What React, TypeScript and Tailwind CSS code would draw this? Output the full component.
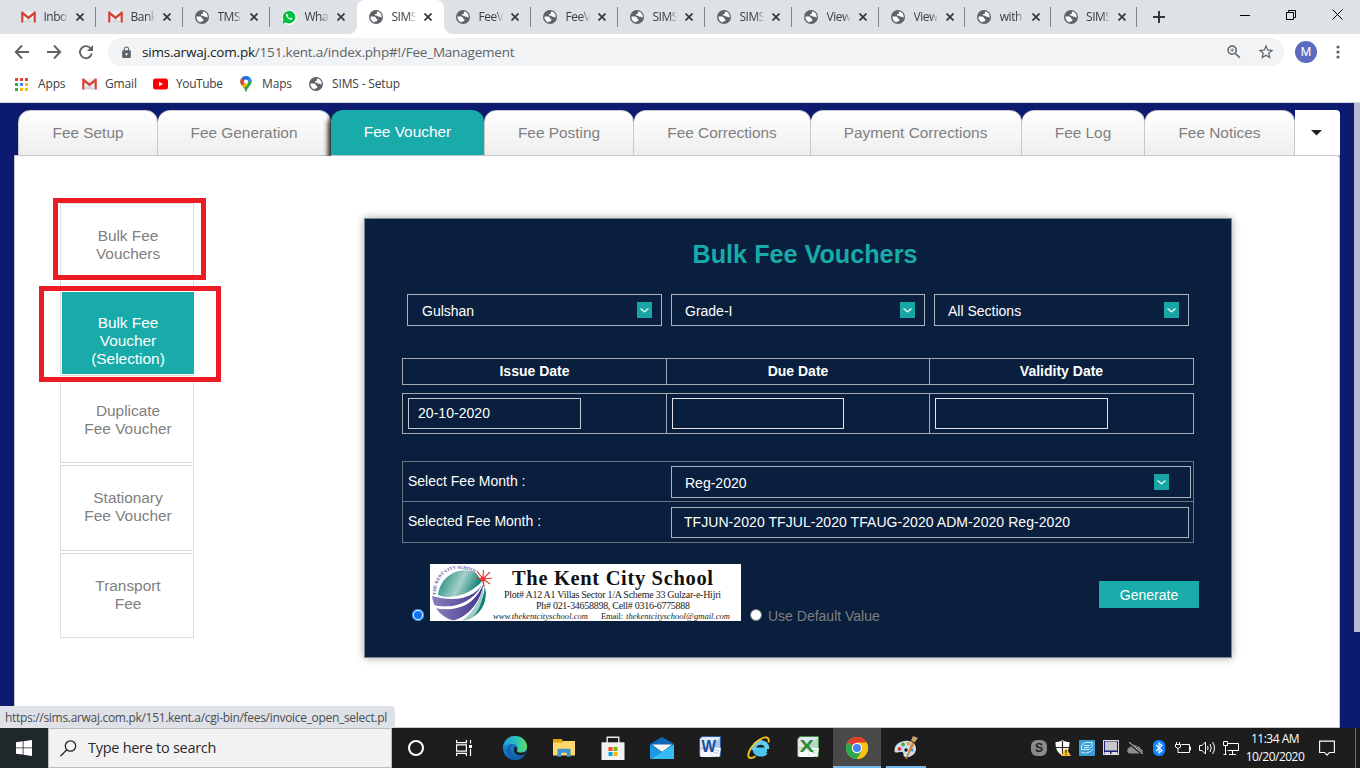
import React from 'react';
import { MdZoomIn, MdStarBorder, MdLock } from 'react-icons/md';

const SEGOE = "font-['Open_Sans','Noto_Sans',sans-serif]";

function Globe() {
  return (
    <svg width="14" height="14" viewBox="0 0 14 14" className="shrink-0">
      <circle cx="7" cy="7" r="7" fill="#5f6368" />
      <path d="M1.4 6.6h3.4c1.5 0 2.2.9 2.2 2.1h1.3v1.5c0 .8-.7 1.2-1.5 1.2H5.6v1.2C3.200 12 1.500 9.800 1.400 6.600z" fill="#fff" />
      <path d="M6.100 5.500V4.100h1.700V2.600c0-.5.500-1 1.100-1.100 2.300.7 3.800 2.900 3.800 5.200l-.4 1-1.200-.9H9.300L8.200 5.700z" fill="#fff" />
    </svg>
  );
}

function Gmail() {
  return (
    <svg width="15" height="12" viewBox="0 0 15 12" className="shrink-0">
      <path d="M1 .5h13v11H1z" fill="#eceff1" />
      <path d="M2 11.500 7.500 7l5.500 4.500z" fill="#d5d8da" />
      <path d="M.2 1.200C.2.500.700.300 1.300.300L7.500 5.200 13.700.300c.7 0 1.100.3 1.100.9V11.500H12.600V4.300L7.500 8.200 2.400 4.300V11.500H.2z" fill="#d64337" />
    </svg>
  );
}

function Whats() {
  return (
    <span className="flex size-[15px] shrink-0 items-center justify-center rounded-full bg-white">
      <svg width="14" height="14" viewBox="0 0 14 14">
        <path d="M.5 13.500 1.500 10A6.300 6.300 0 1 1 4 12.600z" fill="#00c142" />
        <path d="M4.800 3.500c-.9.5-1 1.600-.4 2.800.9 1.900 2.400 3.200 4 3.500.9.200 1.900-.4 1.900-1.300L8.800 7.600l-.8.800C7 8 6.200 7.200 5.700 6.200l.6-.9z" fill="#fff" />
      </svg>
    </span>
  );
}

type TabKind = 'gmail' | 'globe' | 'wa';
const tabs: { kind: TabKind; title: string; active?: boolean; sep?: boolean; narrow?: boolean }[] = [
  { kind: 'gmail', title: 'Inbo', sep: true },
  { kind: 'gmail', title: 'Bank', sep: true },
  { kind: 'globe', title: 'TMS', sep: true },
  { kind: 'wa', title: 'Wha' },
  { kind: 'globe', title: 'SIMS', active: true },
  { kind: 'globe', title: 'FeeV', sep: true },
  { kind: 'globe', title: 'FeeV', sep: true },
  { kind: 'globe', title: 'SIMS', sep: true },
  { kind: 'globe', title: 'SIMS', sep: true },
  { kind: 'globe', title: 'View', sep: true },
  { kind: 'globe', title: 'View', sep: true, narrow: true },
  { kind: 'globe', title: 'with', sep: true, narrow: true },
  { kind: 'globe', title: 'SIMS', sep: true, narrow: true },
];

function TabStrip() {
  return (
    <div className="flex h-[34px] bg-[#dee1e6] pl-[8.5px]">
      {tabs.map((t, i) => (
        <div
          key={i}
          className={`relative flex h-full shrink-0 items-center pl-3 ${t.narrow ? 'w-[86.3px]' : 'w-[87px]'} ${t.active ? 'rounded-t-lg bg-white' : ''}`}
        >
          {t.active && (
            <>
              <span className="absolute bottom-0 -left-2 size-2 bg-[radial-gradient(circle_at_0_0,transparent_7.5px,#fff_8px)]" />
              <span className="absolute -right-2 bottom-0 size-2 bg-[radial-gradient(circle_at_100%_0,transparent_7.5px,#fff_8px)]" />
            </>
          )}
          <span className="flex w-[15px] justify-center">
            {t.kind === 'gmail' ? <Gmail /> : t.kind === 'wa' ? <Whats /> : <Globe />}
          </span>
          <span className="ml-2 w-[27px] text-[12px] tracking-[-0.5px] whitespace-nowrap text-[#3c4043] [mask-image:linear-gradient(to_right,#000_60%,transparent_90%)]">
            {t.title}
          </span>
          <svg width="8" height="8" viewBox="0 0 8 8" className="ml-[5px]">
            <path d="M.5.5l7 7M7.500.5l-7 7" stroke="#33363a" strokeWidth="1.700" />
          </svg>
          {t.sep && <span className="absolute top-[7px] right-0 h-5 w-px bg-[#80848a]" />}
        </div>
      ))}
      <div className="flex w-11 items-center justify-center">
        <svg width="12" height="12" viewBox="0 0 12 12"><path d="M6 0v12M0 6h12" stroke="#33363a" strokeWidth="2" /></svg>
      </div>
      <div className="ml-auto flex h-[29px] items-center">
        <span className="flex w-[46px] justify-center"><svg width="10" height="10"><path d="M0 5.500h10" stroke="#000" /></svg></span>
        <span className="flex w-[46px] justify-center">
          <svg width="10" height="10" fill="none" stroke="#000"><path d="M.5 2.500h7v7h-7zM2.500 2.500v-2h7v7h-2" /></svg>
        </span>
        <span className="flex w-[46px] justify-center"><svg width="11" height="11"><path d="M.5.5l10 10M10.500.5l-10 10" stroke="#000" /></svg></span>
      </div>
    </div>
  );
}

function AppsIcon() {
  const colors = ['#ea4335', '#ea4335', '#ea4335', '#34a853', '#4285f4', '#fbbc05', '#34a853', '#fbbc05', '#fbbc05'];
  return (
    <svg width="13" height="13" viewBox="0 0 13 13">
      {colors.map((c, i) => <rect key={i} x={(i % 3) * 5} y={Math.floor(i / 3) * 5} width="3" height="3" fill={c} />)}
    </svg>
  );
}

function MapsIcon() {
  return (
    <svg width="12" height="16" viewBox="0 0 12 16">
      <defs><clipPath id="pin"><path d="M6 0a5.700 5.700 0 0 1 5.700 5.700C11.700 9.500 7.500 11 6.600 15.200c-.2.900-1 .9-1.200 0C4.500 11 .3 9.500.3 5.700A5.700 5.700 0 0 1 6 0z" /></clipPath></defs>
      <g clipPath="url(#pin)">
        <path d="M0 0h12v16H0z" fill="#34a853" />
        <path d="M0 9 6 3l2 5-5 5z" fill="#fbbc04" />
        <path d="M0 1h6v5L1.500 10 0 8z" fill="#ea4335" />
        <path d="M2 0h10L6 6 1.500 2z" fill="#1a73e8" />
        <path d="M7 5 12 0v6z" fill="#4285f4" />
      </g>
      <circle cx="6" cy="5.700" r="2.100" fill="#fff" />
    </svg>
  );
}

function Browser() {
  return (
    <div className={`${SEGOE} h-[103px] border-b border-[#d9dbde] bg-white`}>
      <TabStrip />
      <div className="flex h-9 items-center text-[#5f6368]">
        <svg width="94" height="18" viewBox="0 0 94 18" className="ml-[14px] shrink-0" fill="none" stroke="#5f6368" strokeWidth="1.900">
          <path d="M15 9H2M8 2.500 1.800 9 8 15.500" />
          <path d="M33 9h13M40 2.500 46.200 9 40 15.500" />
          <path d="M76.800 5.600A6 6 0 1 0 77.800 10.500" />
          <path d="M79 2v6h-6z" fill="#5f6368" stroke="none" />
        </svg>
        <div className="flex h-7 w-[1176px] shrink-0 items-center rounded-full bg-[#f1f3f4] pl-3">
          <MdLock size={13} color="#5f6368" />
          <span className="ml-[9px] text-[13.5px] tracking-[-0.2px]">
            <span className="text-[#202124]">sims.arwaj.com.pk</span>/151.kent.a/index.php#!/Fee_Management
          </span>
          <MdZoomIn size={18} className="ml-auto" />
          <MdStarBorder size={18} className="mr-[9px] ml-[14px]" />
        </div>
        <div className="ml-[11px] flex size-[22px] items-center justify-center rounded-full bg-[#5c6bc0] font-['Roboto',sans-serif] text-[12px] text-white">M</div>
        <svg width="4" height="14" viewBox="0 0 4 14" className="ml-[19px]" fill="#5f6368">
          <circle cx="2" cy="2" r="1.600" /><circle cx="2" cy="7" r="1.600" /><circle cx="2" cy="12" r="1.600" />
        </svg>
      </div>
      <div className="flex h-[28px] items-center pl-[15px] text-[12px] tracking-[-0.15px] text-[#3c4043]">
        <div className="flex w-[67px] items-center"><span className="flex w-[23px]"><AppsIcon /></span>Apps</div>
        <div className="flex w-[71px] items-center"><span className="flex w-[23px]"><Gmail /></span>Gmail</div>
        <div className="flex w-[87px] items-center">
          <span className="flex w-[23px]">
            <svg width="15" height="12" viewBox="0 0 15 12"><rect y=".5" width="15" height="11" rx="2.500" fill="#f00" /><path d="M6 3.700v4.600L10 6z" fill="#fff" /></svg>
          </span><span className="tracking-[-0.4px]">YouTube</span>
        </div>
        <div className="flex w-[69px] items-center"><span className="flex w-[22px]"><MapsIcon /></span>Maps</div>
        <div className="flex items-center"><span className="flex w-[23px]"><Globe /></span>SIMS - Setup</div>
      </div>
    </div>
  );
}

function FeeTabs() {
  const base = 'flex h-[46px] items-center justify-center border-t border-r border-b border-[#c8c8c8] bg-linear-to-b from-white to-[#eee] rounded-t-[12px]';
  return (
    <div className="ml-[3px] flex text-[15.4px] text-[#808080]">
      <div className={`${base} w-[140px] border-l`}>Fee Setup</div>
      <div className={`${base} w-[173px]`}>Fee Generation</div>
      <div className="relative flex h-[46px] w-[153px] items-center justify-center rounded-t-[12px] border-b border-[#c8c8c8] bg-[#18abaa] pb-[2px] text-white shadow-[-3px_3px_5px_#222] [clip-path:inset(0_0_0_-10px)]">Fee Voucher</div>
      <div className={`${base} w-[150px] border-l`}>Fee Posting</div>
      <div className={`${base} w-[177px]`}>Fee Corrections</div>
      <div className={`${base} w-[211px] pr-px`}>Payment Corrections</div>
      <div className={`${base} w-[123px]`}>Fee Log</div>
      <div className={`${base} w-[150px]`}>Fee Notices</div>
      <div className="flex h-[46px] flex-1 items-center justify-center rounded-tr-[4px] border-b border-[#c8c8c8] bg-white pr-[3px]">
        <svg width="11" height="6"><path d="M0 0h11L5.500 5.500z" fill="#222" /></svg>
      </div>
    </div>
  );
}

const side = 'border border-[#ddd] pt-[23px] pl-[2px]';

function SideMenu() {
  return (
    <div className="relative mt-[47px] ml-[45px] flex w-[134px] shrink-0 flex-col text-center text-[15.4px] leading-[18px] text-[#808080]">
      <div className={`${side} h-[86px]`}>Bulk Fee<br />Vouchers</div>
      <div className="mt-px h-[86px] border border-[#ddd] border-r-0 pt-px pl-px">
        <div className="h-[82px] bg-[#18abaa] pt-[22px] text-white">Bulk Fee<br />Voucher<br />(Selection)</div>
      </div>
      <div className={`${side} mt-[2px] h-[85px]`}>Duplicate<br />Fee Voucher</div>
      <div className={`${side} mt-[2px] h-[86px]`}>Stationary<br />Fee Voucher</div>
      <div className={`${side} mt-[2px] h-[85px]`}>Transport<br />Fee</div>
      <div className="absolute -top-[5px] -left-[7px] h-[82px] w-[153px] border-[5px] border-[#ed1c24]" />
      <div className="absolute top-[83px] -left-[21px] h-[96px] w-[182px] border-[5px] border-[#ed1c24]" />
    </div>
  );
}

function Arrow() {
  return (
    <span className="flex h-[16px] w-[15px] items-center justify-center bg-[#18a5a5]">
      <svg width="9" height="5" fill="none" stroke="#e8f5f5" strokeWidth="1.300"><path d="M.5.500 4.500 3.800 8.500.5" /></svg>
    </span>
  );
}

function Select({ label, className }: { label: string; className: string }) {
  return (
    <div className={`flex h-8 items-center justify-between border border-[#adb3bc] ${className}`}>
      <span className="pt-[2px]">{label}</span>
      <Arrow />
    </div>
  );
}

function SchoolBanner() {
  return (
    <svg width="311" height="57" viewBox="0 0 311 57" className="bg-white" fontFamily="'Liberation Serif', serif">
      <defs>
        <linearGradient id="sphere" x1="0" x2="1" y1="0" y2=".3">
          <stop offset="0" stopColor="#0b7d70" /><stop offset=".6" stopColor="#a5d0ca" /><stop offset="1" stopColor="#0f8173" />
        </linearGradient>
        <linearGradient id="band" x1="0" x2="1"><stop offset="0" stopColor="#8a80bf" /><stop offset="1" stopColor="#3f3388" /></linearGradient>
        <path id="arc" d="M6 31C5 8 26 -2 46 9.500" />
        <clipPath id="ball"><circle cx="29" cy="30" r="27" /></clipPath>
      </defs>
      <path d="M8 31C10 12 30 1 46 9L52 17C44 28 22 37 8 31z" fill="url(#sphere)" />
      <g clipPath="url(#ball)">
        <path d="M54 17C48 31 30 40 2 32v9C26 47 46 36 54 17z" fill="url(#band)" />
        <path d="M54 19C46 38 30 49 3 43l5 9 14 5C40 52 50 38 54 19z" fill="url(#band)" />
        <path d="M3 41C26 46 42 39 50 25 42 43 24 48 4 44z" fill="#fff" />
        <path d="M55 20C54 38 46 49 36 57h6C54 48 58 36 55 20z" fill="#0f8173" />
        <path d="M53 22C50 38 42 49 32 57h7C49 48 54 36 53 22z" fill="#9fccc6" />
      </g>
      <g stroke="#e23b30" strokeWidth="1.200">
        <path d="M53 15 47 7M53 15 53.500 6M53 15 60 8M53 15 62 14M53 15 60 20M53 15 54 23M53 15 46 14" />
      </g>
      <circle cx="53" cy="15" r="2.600" fill="#e8392e" />
      <text fontSize="4.600" fontWeight="bold" fill="#5a4e9e"><textPath href="#arc">THE KENT CITY SCHOOL</textPath></text>
      <text x="82" y="20.500" fontSize="20.500" fontWeight="bold" fill="#111" textLength="201">The Kent City School</text>
      <text x="74" y="33.500" fontSize="10" fill="#222" textLength="217">Plot# A12 A1 Villas Sector 1/A Scheme 33 Gulzar-e-Hijri</text>
      <text x="106" y="44.500" fontSize="10" fill="#222" textLength="154">Ph# 021-34658898, Cell# 0316-6775888</text>
      <text x="63" y="54.500" fontSize="8.500" fontStyle="italic" fill="#222" textLength="95">www.thekentcityschool.com</text>
      <text x="171" y="54.500" fontSize="8.500" fill="#222" textLength="22">Email:</text>
      <text x="196" y="54.500" fontSize="8.500" fontStyle="italic" fill="#222" textLength="104">thekentcityschool@gmail.com</text>
    </svg>
  );
}

function VoucherPanel() {
  const line = 'border-[#a3aab4]';
  const dim = 'border-[#6c7582]';
  return (
    <div className="mt-[62px] ml-[170px] h-[440px] w-[868px] shrink-0 border border-[#7c8592] bg-[#091f3d] text-[14px] text-white shadow-[0_0_8px_rgba(0,0,0,0.35)]">
      <h1 className="mt-[19px] pl-[14px] text-center text-[25.2px] leading-[32px] font-bold text-[#18abaa]">Bulk Fee Vouchers</h1>
      <div className="mt-[24px] ml-[42px] flex gap-[9px]">
        <Select label="Gulshan" className="w-[255px] pr-[9px] pl-[14px]" />
        <Select label="Grade-I" className="w-[254px] pr-[9px] pl-[13px]" />
        <Select label="All Sections" className="w-[255px] pr-[9px] pl-[13px]" />
      </div>
      <div className={`mt-[32px] ml-[37px] flex h-[27px] w-[792px] border text-center leading-[25px] font-bold ${line}`}>
        <div className={`w-[264px] border-r ${line}`}>Issue Date</div>
        <div className={`w-[263px] border-r ${line}`}>Due Date</div>
        <div className="flex-1">Validity Date</div>
      </div>
      <div className={`mt-[8px] ml-[37px] flex h-[41px] w-[792px] border ${line}`}>
        <div className={`w-[264px] border-r pt-[4px] pl-[5px] ${line}`}>
          <div className="h-[31px] w-[173px] border border-[#c3c8ce] pl-[9px] leading-[28px] tracking-[0.04px]">20-10-2020</div>
        </div>
        <div className={`w-[263px] border-r pt-[4px] pl-[5px] ${line}`}><div className="h-[31px] w-[172px] border border-[#e3e5e8]" /></div>
        <div className="pt-[4px] pl-[5px]"><div className="h-[31px] w-[173px] border border-[#e3e5e8]" /></div>
      </div>
      <div className={`mt-[27px] ml-[37px] w-[792px] border ${dim}`}>
        <div className={`flex h-[40px] border-b ${dim}`}>
          <div className="w-[268px] pl-[5px] leading-[39px]">Select Fee Month :</div>
          <Select label="Reg-2020" className="mt-1 w-[520px] pr-[21px] pl-[13px]" />
        </div>
        <div className="flex h-[40px]">
          <div className="w-[268px] pl-[5px] leading-[38px]">Selected Fee Month :</div>
          <div className="mt-[5px] h-[31px] w-[518px] border border-[#adb3bc] pl-[12px] leading-[29px] tracking-[0.06px]">TFJUN-2020 TFJUL-2020 TFAUG-2020 ADM-2020 Reg-2020</div>
        </div>
      </div>
      <div className="mt-[21px] ml-[47px] flex items-end">
        <span className="flex size-3 items-center justify-center rounded-full bg-white ring-1 ring-[#0b74e8] ring-inset"><span className="size-2 rounded-full bg-[#0b74f5]" /></span>
        <span className="ml-[6px]"><SchoolBanner /></span>
        <span className="ml-[9px] size-3 rounded-full border border-[#767676] bg-white" />
        <span className="ml-[6px] leading-[9px] text-[#808080]">Use Default Value</span>
        <span className="mr-[32px] mb-[13px] ml-auto h-[27px] w-[100px] bg-[#18abaa] text-center leading-[28px]">Generate</span>
      </div>
    </div>
  );
}

function Slot({ children, className = 'w-[49px]' }: { children: React.ReactNode; className?: string }) {
  return <div className={`flex h-full shrink-0 items-center justify-center ${className}`}>{children}</div>;
}

function OfficeIcon({ letter, a, b }: { letter: string; a: string; b: string }) {
  return (
    <svg width="22" height="22" viewBox="0 0 22 22">
      <path d="M3 .5h18.500v20H.500V3z" fill="#dfe7f2" stroke={a} strokeWidth=".8" />
      <path d="M1 12C8 11 15 8 21 2v11H1z" fill={b} opacity=".5" />
      <path d="M2 15h15v6H2z" fill="#f7f9fc" />
      <path d="m14 11 8 1-2 9-9-2z" fill="#fff" stroke="#bcc9da" strokeWidth=".5" />
      <path d="m15.500 14 4.500.8M14.500 16.500l5 .8" stroke={b} strokeWidth=".7" />
      <text x="2.500" y="15.500" fontFamily="'Liberation Sans', sans-serif" fontWeight="bold" fontSize="17" textLength="14.500" lengthAdjust="spacingAndGlyphs" fill={a}>{letter}</text>
    </svg>
  );
}

function Taskbar() {
  return (
    <div className={`${SEGOE} flex h-10 bg-[#1d1d1d] text-white`}>
      <div className="flex w-12 items-center justify-center bg-[#20272b]">
        <svg width="16" height="16" viewBox="0 0 16 16" fill="#fff"><path d="M0 2.200 6.700 1.300V7.500H0zM7.500 1.200 16 0v7.500H7.500zM0 8.300h6.700v6.300L0 13.700zM7.500 8.300H16V16l-8.500-1.200z" /></svg>
      </div>
      <div className="flex w-[344px] items-center border border-[#bdbdbd] bg-[#f2f2f2] pl-[11px] text-[#2b2b2b]">
        <svg width="17" height="17" viewBox="0 0 17 17" fill="none" stroke="#222" strokeWidth="1.300"><circle cx="10.500" cy="6" r="5.200" /><path d="M6.800 9.800.5 16.200" /></svg>
        <span className="ml-[11px] text-[14.5px] tracking-[-0.28px]">Type here to search</span>
      </div>
      <div className="flex w-12 items-center justify-center"><span className="size-4 rounded-full border-2 border-white" /></div>
      <div className="flex w-[50px] items-center pl-4">
        <svg width="16" height="16" viewBox="0 0 16 16" fill="none" stroke="#fff" strokeWidth="1.200">
          <path d="M.6 0v2.600h9.800V0M.6 16v-2.600h9.800V16M.6 4.800h9.800v6.400H.6zM14.500 0v3.500M14.500 9v7" /><path d="M13 5h3v3h-3z" fill="#fff" stroke="none" />
        </svg>
      </div>
      <Slot>
        <svg width="24" height="24" viewBox="0 0 24 24">
          <defs>
            <linearGradient id="ed1" x1="0" x2="1"><stop offset="0" stopColor="#1b9de2" /><stop offset=".6" stopColor="#2fc6b4" /><stop offset="1" stopColor="#5fdf5c" /></linearGradient>
            <linearGradient id="ed2" x1="0" x2="1" y2="1"><stop offset="0" stopColor="#1d8fe0" /><stop offset="1" stopColor="#0c59a4" /></linearGradient>
          </defs>
          <circle cx="12" cy="12" r="12" fill="url(#ed2)" />
          <path d="M0 11C1 4 6 0 12 0c7 0 12 5 12 10.500 0 4-3 6-6.500 6-2.500 0-4-1-3.500-2 1.500-2 .5-6-3.500-6.500C6 7.500 2 9 0 11z" fill="url(#ed1)" />
          <path d="M11 8C7 9 6.500 14 9 17c3 4 9 4.500 13.500 1.500C20 22 16 24 12 24 6 23 2 18 4 13c1-3 4-5 7-5z" fill="#1263ae" />
          <path d="M12.500 10.500c2 1.500 1.800 3 1 4.200 0 1.800 5 3 9.500 1l-1 2.500c-4 2-10 1-11-3.500-.3-2 .5-3.500 1.500-4.200z" fill="#1d1d1d" />
        </svg>
      </Slot>
      <Slot>
        <svg width="22" height="18" viewBox="0 0 22 18"><path d="M0 0h8.500l1.500 2v3H0z" fill="#e5a50a" /><path d="M0 3.500h9L10.500 2H22v14.500H0z" fill="#ffd96b" /><path d="M4.500 17.800V9.700h13v8.100h-3.700v-4h-5.600v4z" fill="#3e93d6" /></svg>
      </Slot>
      <Slot>
        <svg width="24" height="24" viewBox="0 0 24 24"><path d="M6.200 7V1.200h11.600V7" fill="none" stroke="#e8e8e8" strokeWidth="1.400" /><path d="M.5 6.300h23V24H.5z" fill="#f2f2f2" /><path d="M7.500 11h4v4h-4z" fill="#f25022" /><path d="M12.500 11h4v4h-4z" fill="#7fba00" /><path d="M7.500 16h4v4h-4z" fill="#00a4ef" /><path d="M12.500 16h4v4h-4z" fill="#ffb900" /></svg>
      </Slot>
      <Slot>
        <svg width="24" height="22" viewBox="0 0 24 22"><path d="M0 7 12 0l12 7v6H0z" fill="#0f68b8" /><path d="M2 7.500h20L12 15z" fill="#f7f7f7" /><path d="M24 7.500V22H0z" fill="#35bdf3" /><path d="M0 7.500 12 15 0 22z" fill="#1e98e0" /></svg>
      </Slot>
      <Slot className="w-[48px] pb-[2px]"><OfficeIcon letter="W" a="#1b4f9f" b="#7ea3d6" /></Slot>
      <Slot>
        <svg width="24" height="24" viewBox="0 0 24 24" fill="none">
          <path d="M20 13.800H8C8.500 19 16.500 19.500 18.500 16" stroke="#4fc3f0" strokeWidth="4.600" />
          <path d="M7 14C5.500 4.500 20.500 3.500 20 13" stroke="#62cdf5" strokeWidth="4.600" />
          <path d="M21.500 6.500C23 .5 18 0 12 4 5 9 .5 16 1.500 20.500c.5 2.200 3.500 2 7-.2" stroke="#f5c51d" strokeWidth="1.900" />
        </svg>
      </Slot>
      <Slot className="w-[49px] pb-[2px]"><OfficeIcon letter="X" a="#2e8b30" b="#8cc685" /></Slot>
      <Slot className="ml-px w-[48px] border-b-2 border-[#76b9ed] bg-[#494949] pt-[2px]">
        <svg width="22" height="22" viewBox="0 0 24 24">
          <circle cx="12" cy="12" r="12" fill="#fbc116" />
          <path d="M12 12 1.600 6A12 12 0 0 1 22.400 6z" fill="#e33b2e" />
          <path d="M12 12 1.600 6A12 12 0 0 0 12 24l5.500-9z" fill="#2da94f" />
          <path d="M12 6h10.400A12 12 0 0 1 12 24l5.500-9z" fill="#fbc116" />
          <circle cx="12" cy="12" r="5.700" fill="#fff" /><circle cx="12" cy="12" r="4.400" fill="#4384f3" />
        </svg>
      </Slot>
      <Slot className="w-[49px] flex-col">
        <svg width="24" height="24" viewBox="0 0 24 24" className="mt-[8px]">
          <path d="M11 5c7-1 11 3 11 8 0 6-7 9-11 8-3-1 0-4-3-5-3-.5-7 2-7.500-1C.2 9 5 5.500 11 5z" fill="#c8e0f2" />
          <circle cx="5.500" cy="13" r="2" fill="#d8433b" /><circle cx="9" cy="8.500" r="2" fill="#58a83c" /><circle cx="14.500" cy="7.500" r="1.900" fill="#f0a52c" /><circle cx="12" cy="14" r="1.700" fill="#1d1d1d" /><circle cx="18" cy="14" r="1.500" fill="#4a90d9" />
          <path d="m12 23 6-16 2 .7z" fill="#e08a2e" stroke="#d97f22" /><path d="M17 4.500 19 0l5 2-3.500 4.500z" fill="#cda36a" />
        </svg>
        <span className="mt-auto h-0.5 w-10 shrink-0 bg-[#76b9ed]" />
      </Slot>
      <div className="ml-auto flex items-center">
        <span className="flex w-6 justify-center"><svg width="16" height="16"><rect width="16" height="16" rx="6" fill="#8a8a8a" /><text x="4" y="12.300" fontSize="12" fontWeight="bold" fontFamily="'Liberation Sans', sans-serif" fill="#222">S</text></svg></span>
        <span className="flex w-6 justify-center"><svg width="16" height="16" viewBox="0 0 16 16"><path d="M7.500 0C9 1.500 12 2 14.500 2c0 7-2 11-7 13.500C2.500 13 .5 9 .5 2 3 2 6 1.500 7.500 0z" fill="#fff" /><path d="M7.500 1v14M.5 7.500h14" stroke="#222" strokeWidth="1.200" /><path d="m11 7.500 5 8.500H6z" fill="#fbc02d" /><path d="M11 10v3M11 14v1" stroke="#222" strokeWidth="1.100" /></svg></span>
        <span className="flex w-6 justify-center"><svg width="16" height="16" viewBox="0 0 16 16"><rect width="16" height="16" rx="1" fill="#3a9fd8" /><path d="M2.500 5.500 6 2.500h7v4L10 9.500H2.500zM5 5.500h6M5 7.500h5M2 12c4 2 9 1 12-3" fill="none" stroke="#d3effc" /></svg></span>
        <span className="flex w-6 justify-center"><svg width="16" height="16" viewBox="0 0 16 16"><rect x=".5" y=".5" width="15" height="14" fill="#1b1f7a" stroke="#ddd" /><path d="M2 1.500h12v9H2z" fill="#c9c9c9" /><path d="M1.500 12h5.500v2.500H1.500zM8.500 12H14.500v2.500h-6z" fill="#ddd" /></svg></span>
        <span className="flex w-6 justify-center"><svg width="17" height="13" viewBox="0 0 17 13"><path d="M3.500 11.500a3 3 0 0 1-.5-6C3.500 2.500 8 1.500 10 4.500c3 0 3.500 1.500 3.500 2.500 3 0 3 4.500.5 4.500z" fill="#8c8c8c" /><path d="m1.500.5 14.500 12" stroke="#1d1d1d" strokeWidth="2.500" /><path d="m2 0 14 12" stroke="#ddd" /></svg></span>
        <span className="flex w-6 justify-center"><svg width="12" height="16" viewBox="0 0 12 16"><rect width="12" height="16" rx="5.500" fill="#0a84ff" /><path d="m3 5 6 5.500L6 13V3l3 2.500L3 11" fill="none" stroke="#fff" strokeWidth="1.100" /></svg></span>
        <span className="flex w-6 justify-center"><svg width="16" height="12" viewBox="0 0 16 12" fill="none" stroke="#fff"><path d="M6.500 2.500h8v8H5.500M14.500 5h1v3h-1M1.500 0v2M4.500 0v2M.5 2.500h5V5L3 6.500.500 5zM3 6.500V10.500h2.500" /></svg></span>
        <span className="flex w-6 justify-center"><svg width="17" height="14" viewBox="0 0 17 14" fill="none" stroke="#fff"><path d="M.5 4.500h2.500l3.500-3.500v12L3 9.500H.5zM8.500 5q1.200 2 0 4M11 3q2.500 4 0 8M13.500 1q4 6 0 12" /></svg></span>
        <span className="flex w-6 justify-center"><svg width="16" height="14" viewBox="0 0 16 14" fill="none" stroke="#fff"><path d="M5 2.500h10.500v7H4.500M9.500 9.500v4M6 13.500h7M.5.5h4v4h-4zM2.500 4.500v9M.5 13.500h3" /></svg></span>
        <div className="w-[64px] text-center text-[12px] leading-[18px] tracking-[-0.5px] whitespace-nowrap">11:34 AM<br />10/20/2020</div>
        <svg width="16" height="16" viewBox="0 0 16 16" className="ml-[12px]" fill="none" stroke="#fff" strokeWidth="1.100"><path d="M.6 1.100h14.800v11.400h-5L8 15.200 5.600 12.500h-5z" /></svg>
        <span className="mr-[4px] ml-[20px] h-10 w-px bg-[#6b6b6b]" />
      </div>
    </div>
  );
}

export default function App() {
  return (
    <div className="relative flex h-[768px] w-[1360px] flex-col overflow-hidden font-['Liberation_Sans',Arial,sans-serif]">
      <Browser />
      <main className="flex h-[625px] bg-[#0c1b70]">
        <div className="ml-[14px] w-[1326px] pt-[7px]">
          <div className="pl-px"><FeeTabs /></div>
          <div className="-mt-px flex h-[573px] rounded-tr-[3px] border border-[#c8c8c8] bg-white">
            <SideMenu />
            <VoucherPanel />
          </div>
        </div>
        <div className="ml-[14px] h-[529px] w-1.5 bg-[#b6b9d3]" />
      </main>
      <div className={`${SEGOE} absolute top-[706px] left-0 h-[22px] w-[395px] rounded-tr-[4px] bg-[#dee1e6] pl-[5px] text-[12px] leading-[23px] tracking-[-0.31px] whitespace-nowrap text-[#4a4d51]`}>
        https://sims.arwaj.com.pk/151.kent.a/cgi-bin/fees/invoice_open_select.pl
      </div>
      <Taskbar />
    </div>
  );
}
